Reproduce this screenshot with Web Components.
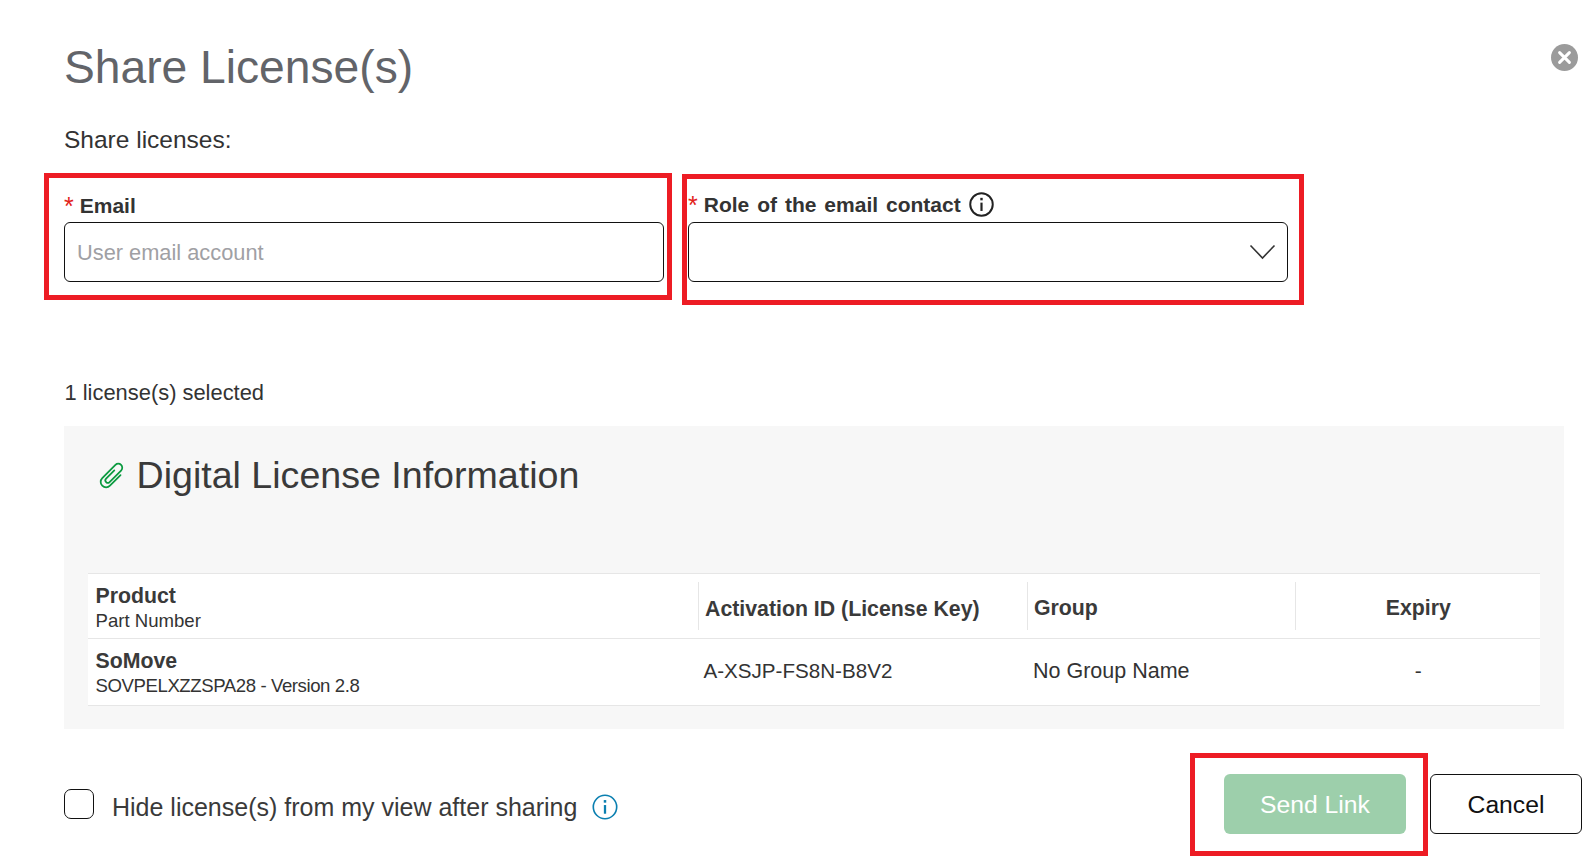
<!DOCTYPE html>
<html lang="en">
<head>
<meta charset="utf-8">
<title>Share License(s)</title>
<style>
html,body{margin:0;padding:0;background:#fff;}
body{font-family:"Liberation Sans",Arial,sans-serif;color:#333;}
</style>
</head>
<body>
<share-dialog>
  <dialog-header slot="header">Share License(s)</dialog-header>
  <span slot="intro">Share licenses:</span>
  <mark-box slot="email" style="--w:628px;--pad:16px 3px 13px 15px;">
    <form-field placeholder="User email account" gap="4px">Email</form-field>
  </mark-box>
  <mark-box slot="role" style="--w:622px;--pad:14px 11px 18px 1px;--mt:1px;">
    <form-field select info wide gap="5px">Role of the email contact</form-field>
  </mark-box>
  <span slot="count">1 license(s) selected</span>
  <license-panel slot="panel">
    <span slot="title">Digital License Information</span>
    <license-table>
      <table-cell head style="--pt:6px"><b>Product</b><small>Part Number</small></table-cell>
      <table-cell head sep style="--pl:7.5px;--pt:7px"><b>Activation ID (License Key)</b></table-cell>
      <table-cell head sep style="--pl:7px;--pt:6px"><b>Group</b></table-cell>
      <table-cell head sep center style="--cx:2px;--pt:6px"><b>Expiry</b></table-cell>
      <table-cell style="--pt:4px"><b>SoMove</b><small style="letter-spacing:-.42px">SOVPELXZZSPA28 - Version 2.8</small></table-cell>
      <table-cell data style="--pl:6px;--fs:20.6px">A-XSJP-FS8N-B8V2</table-cell>
      <table-cell data style="--pl:6px;--fs:21.5px;--pb:0px">No Group Name</table-cell>
      <table-cell data center style="--cx:2px">-</table-cell>
    </license-table>
  </license-panel>
  <dialog-footer slot="footer">
    <span slot="check">Hide license(s) from my view after sharing</span>
    <mark-box slot="send" style="--pad:16px 17px 17px 29px;">
      <action-button primary>Send Link</action-button>
    </mark-box>
    <action-button slot="cancel">Cancel</action-button>
  </dialog-footer>
</share-dialog>
<script>
function define(name, css, html, extra){
  const tpl=document.createElement('template');
  tpl.innerHTML='<style>'+css+'</style>'+html;
  customElements.define(name,class extends HTMLElement{
    constructor(){super();this.attachShadow({mode:'open'}).appendChild(tpl.content.cloneNode(true));}
    connectedCallback(){if(extra)extra(this,this.shadowRoot);}
  });
}
const infoSvg=(c,s,w)=>`<svg width="${s}" height="${s}" viewBox="0 0 24 24" fill="none" stroke="${c}" stroke-width="${w}"><circle cx="12" cy="12" r="10.8"/><path d="M12 10.2V18.2" stroke-width="2.1"/><path d="M12 5.6V8" stroke-width="2.3"/></svg>`;

define('share-dialog',`
:host{display:block;width:1594px;height:868px;box-sizing:border-box;overflow:hidden;font-family:"Liberation Sans",Arial,sans-serif;color:#333;}
.intro{font-size:24.5px;line-height:30px;padding-left:64px;margin-bottom:18px;}
.form{display:flex;align-items:flex-start;gap:10px;padding-left:44px;height:132px;}
.count{font-size:21.9px;line-height:30px;padding-left:64.5px;margin-top:73px;margin-bottom:18px;}
.panel{padding:0 30px 24px 63.5px;}
`,`
<slot name="header"></slot>
<div class="intro"><slot name="intro"></slot></div>
<div class="form"><slot name="email"></slot><slot name="role"></slot></div>
<div class="count"><slot name="count"></slot></div>
<div class="panel"><slot name="panel"></slot></div>
<slot name="footer"></slot>
`);

define('dialog-header',`
:host{display:flex;justify-content:space-between;align-items:flex-start;height:125px;box-sizing:border-box;padding:37px 16px 0 64px;}
h1{margin:0;font-weight:400;font-size:46.2px;line-height:60px;color:#626469;}
.close{width:27px;height:27px;margin-top:6.5px;}
`,`
<h1><slot></slot></h1>
<svg class="close" viewBox="0 0 27 27"><circle cx="13.5" cy="13.5" r="13.5" fill="#9b9b9b"/><path d="M8.6 8.6L18.4 18.4M18.4 8.6L8.6 18.4" stroke="#fff" stroke-width="3" stroke-linecap="round"/></svg>
`);

define('mark-box',`
:host{display:block;box-sizing:border-box;width:var(--w,auto);margin-top:var(--mt,0);padding:var(--pad,0);border:5px solid #ed1c24;background:#fff;}
`,`<slot></slot>`);

define('form-field',`
:host{display:block;}
.label{display:flex;align-items:center;height:24px;font-size:21px;font-weight:700;color:#333;}
.star{color:#e2231a;font-weight:400;font-size:25px;line-height:24px;margin-right:6px;}
:host([wide]) .label{word-spacing:2.1px;}
.info{display:none;margin-left:8px;height:25px;margin-top:-1px;}
:host([info]) .info{display:block;}
.box{display:flex;align-items:center;justify-content:space-between;box-sizing:border-box;height:60px;border:1px solid #111;border-radius:6px;padding:1px 11px 0 12px;font-size:21.8px;color:#9fa0a4;background:#fff;}
.chev{display:none;width:27px;height:16px;margin-top:-1px;}
:host([select]) .chev{display:block;}
`,`
<div class="label"><span class="star">*</span><slot></slot><span class="info">${infoSvg('#222',25,1.9)}</span></div>
<div class="box"><span class="ph"></span><svg class="chev" viewBox="0 0 27 16" fill="none" stroke="#333" stroke-width="1.6"><path d="M1.5 1.5L13.5 14L25.5 1.5"/></svg></div>
`,(el,root)=>{
  root.querySelector('.ph').textContent=el.getAttribute('placeholder')||'';
  root.querySelector('.box').style.marginTop=el.getAttribute('gap')||'5px';
});

define('license-panel',`
:host{display:block;background:#f7f7f7;height:303px;box-sizing:border-box;padding:0 24px 24px;}
.head{display:flex;align-items:center;height:146.5px;padding:22px 0 69.5px 9px;box-sizing:border-box;gap:9px;font-size:37.6px;color:#3a3a3a;}
svg{width:31px;height:31px;flex:none;}
`,`
<div class="head">
<svg viewBox="0 0 24 24" fill="none" stroke="#0a9a3f" stroke-width="1.35" stroke-linecap="round" stroke-linejoin="round"><g transform="rotate(45 12 12)"><path d="M10.2 8.2V17.2a1.9 1.9 0 0 0 3.8 0V4.6a3.1 3.1 0 0 0-6.2 0V19a4.2 4.2 0 0 0 8.4 0V7.4"/></g></svg>
<slot name="title"></slot>
</div>
<slot></slot>
`);

define('license-table',`
:host{display:grid;grid-template-columns:610px 329.5px 268px 244.5px;grid-template-rows:65px 67px;background:#fff;border-top:1.5px solid #e6e6e6;}
`,`<slot></slot>`);

define('table-cell',`
:host{display:flex;flex-direction:column;justify-content:center;position:relative;box-sizing:border-box;padding:var(--pt,0) 0 var(--pb,2px) var(--pl,8px);border-bottom:1.5px solid #e6e6e6;font-size:var(--fs,20.8px);color:#333;white-space:nowrap;line-height:25px;}
:host([head]),:host(:not([data])){padding-bottom:0;}
:host([center]){align-items:center;padding-left:var(--cx,0);}
:host([sep])::before{content:"";position:absolute;left:0;top:8px;bottom:8px;width:1px;background:#e6e6e6;}
::slotted(b){font-size:21.3px;font-weight:700;display:block;color:#3a3a3a;}
::slotted(small){font-size:18.6px;display:block;margin-top:-1px;}
`,`<slot></slot>`);

define('dialog-footer',`
:host{display:flex;align-items:center;justify-content:space-between;height:103px;padding:0 12px 0 64px;}
.check{display:flex;align-items:center;font-size:25px;color:#3a3a3a;padding-top:6px;}
.box{width:30px;height:30px;box-sizing:border-box;border:1px solid #111;border-radius:7px;margin-right:18px;margin-top:-8px;}
.info{margin-left:15px;height:26px;margin-top:-2px;}
.right{display:flex;align-items:center;gap:2px;}
::slotted(action-button){margin-top:-2px;}
`,`
<div class="check"><span class="box"></span><slot name="check"></slot><span class="info">${infoSvg('#0a7fb0',26,1.5)}</span></div>
<div class="right"><slot name="send"></slot><slot name="cancel"></slot></div>
`);

define('action-button',`
:host{display:flex;align-items:center;justify-content:center;box-sizing:border-box;height:60px;width:152px;border:1px solid #111;border-radius:6px;padding-top:3px;font-size:24.7px;color:#111;background:#fff;}
:host([primary]){width:182px;border:none;padding-top:1px;background:#9dcfab;color:#fff;}
`,`<slot></slot>`);
</script>
</body>
</html>
